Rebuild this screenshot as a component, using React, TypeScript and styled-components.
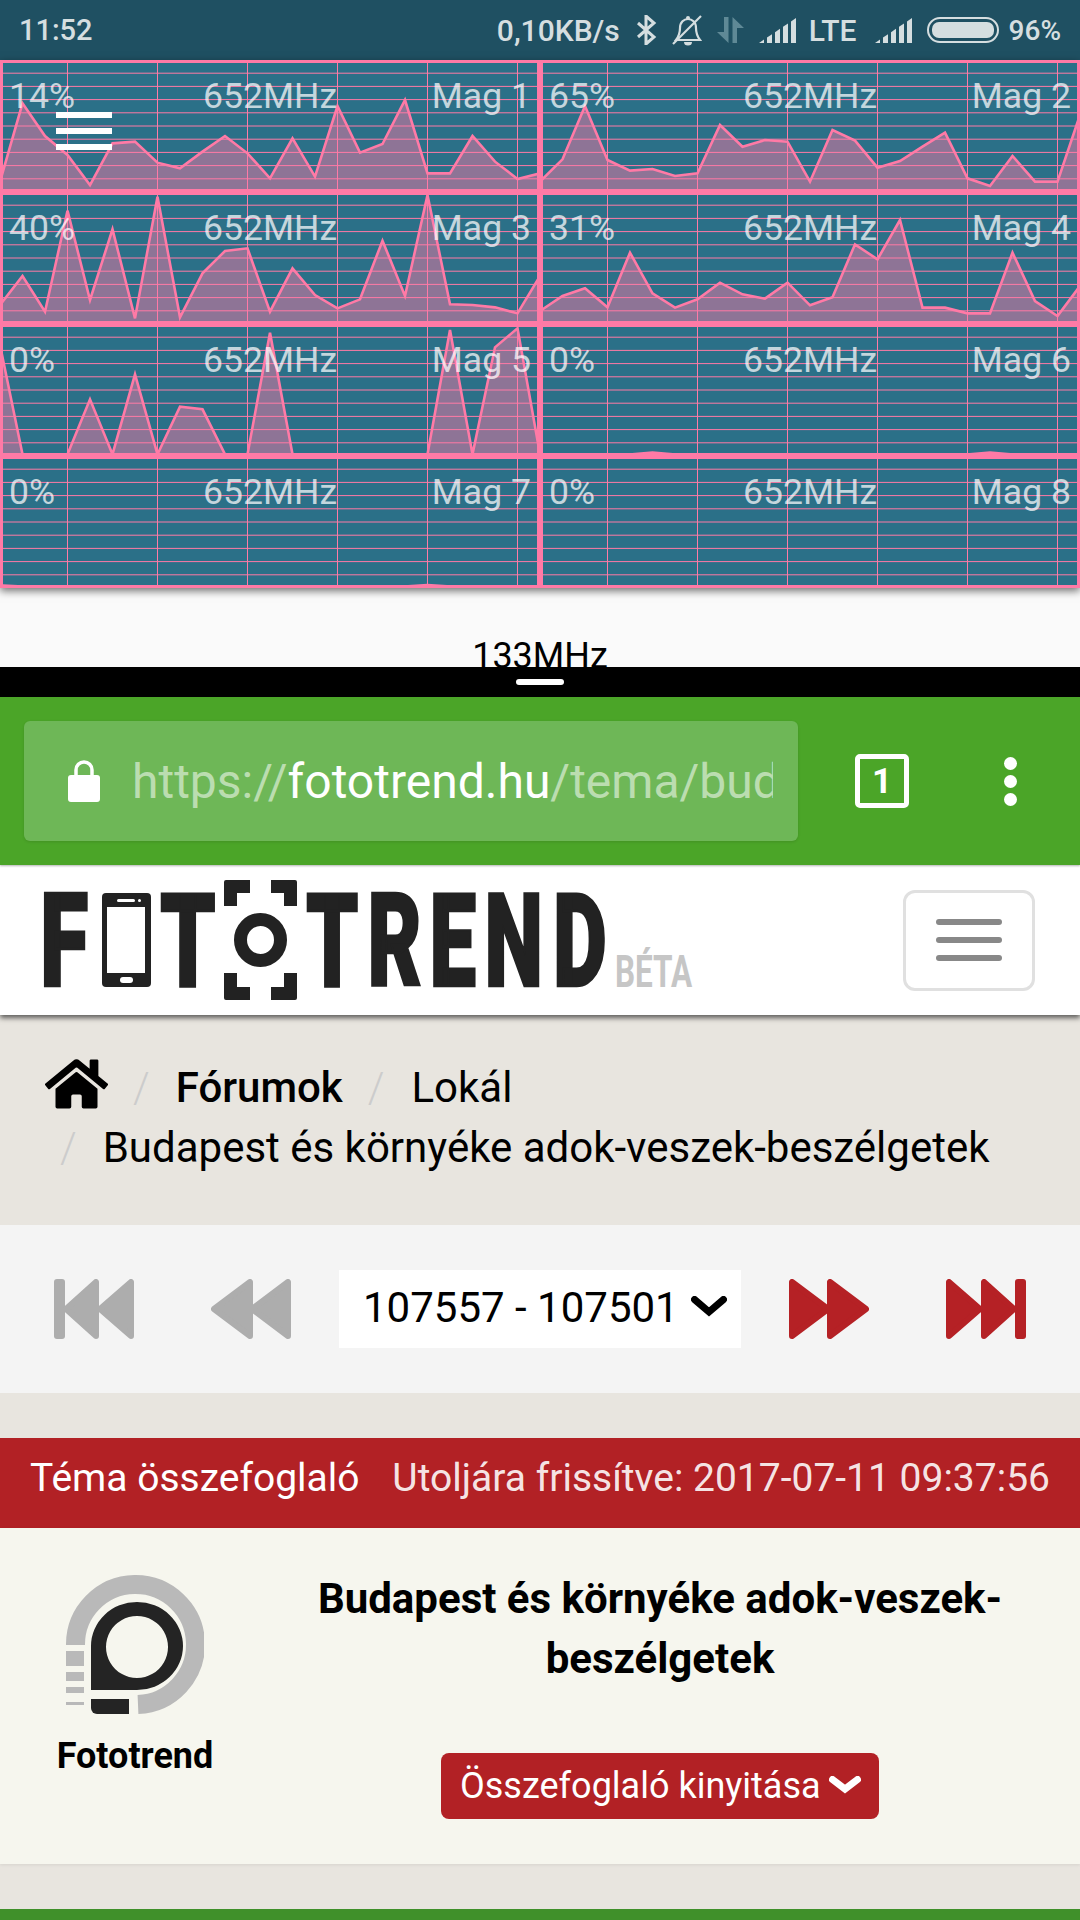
import React from "react";
import styled, { createGlobalStyle } from "styled-components";
import { FaHome } from "react-icons/fa";

const Global = createGlobalStyle`
  html, body { margin: 0; padding: 0; background: #e8e5df; }
  body { font-family: Roboto, "Liberation Sans", sans-serif; width: 1080px; height: 1920px; overflow: hidden; }
  * { box-sizing: border-box; }
`;

const Page = styled.div`
  width: 1080px;
  height: 1920px;
  display: flex;
  flex-direction: column;
  overflow: hidden;
`;

/* Status bar */
const StatusBar = styled.div`
  height: 60px;
  background: #1f5062;
  display: flex;
  align-items: center;
  padding: 0 19px;
  color: #d5dee0;
  font-size: 29px;
  font-weight: 500;
  flex: none;
`;
const Clock = styled.span`
  margin-right: auto;
`;
const StatusText = styled.span<{ $ml?: number; $size?: number }>`
  margin-left: ${(p) => p.$ml ?? 0}px;
  font-size: ${(p) => p.$size ?? 30}px;
`;
const StatusIcon = styled.svg<{ $ml: number }>`
  margin-left: ${(p) => p.$ml}px;
  flex: none;
  display: block;
`;

const Signal = ({ ml }: { ml: number }) => {
  const W = 37;
  const H = 25;
  const bars = [0, 8, 16, 24, 32];
  return (
    <StatusIcon $ml={ml} width={W} height={H} viewBox={`0 0 ${W} ${H}`}>
      {bars.map((x) => {
        const x1 = x + 5;
        const y0 = H * (1 - x / W);
        const y1 = H * (1 - x1 / W);
        return <polygon key={x} points={`${x},${y0} ${x1},${y1} ${x1},${H} ${x},${H}`} fill="#d5dee0" />;
      })}
    </StatusIcon>
  );
};

/* CPU graph grid */
const ChartGrid = styled.div`
  height: 528px;
  flex: none;
  display: grid;
  grid-template-columns: 540px 540px;
  grid-template-rows: repeat(4, 132px);
  position: relative;
  z-index: 2;
  box-shadow: 0 3px 8px rgba(0, 0, 0, 0.55);
`;
const ChartCell = styled.div`
  position: relative;
  background: #2b7088;
  border: 3px solid #ff7aa6;
  overflow: hidden;
`;
const ChartSvg = styled.svg`
  position: absolute;
  left: -3px;
  top: -3px;
  width: 540px;
  height: 132px;
`;
const LabelRow = styled.div`
  position: absolute;
  left: 0;
  right: 0;
  top: 13px;
  padding: 0 6px 0 6px;
  display: grid;
  grid-template-columns: 1fr auto 1fr;
  font-size: 35.6px;
  line-height: 40px;
  color: rgba(255, 255, 255, 0.72);
`;
const LabelEnd = styled.span`
  text-align: right;
`;
const MenuOverlay = styled.div`
  position: absolute;
  left: 56px;
  top: 52px;
  width: 56px;
  display: flex;
  flex-direction: column;
  gap: 10px;
`;
const MenuBar = styled.span`
  height: 6px;
  background: #fff;
`;

/* below graph */
const ClockBand = styled.div`
  height: 79px;
  flex: none;
  background: #fafafa;
  overflow: hidden;
  text-align: center;
  padding-top: 48px;
  font-size: 36px;
  line-height: 40px;
  color: #000;
`;
const Divider = styled.div`
  height: 30px;
  flex: none;
  background: #000;
  display: flex;
  align-items: center;
  justify-content: center;
`;
const Handle = styled.span`
  width: 48px;
  height: 6px;
  border-radius: 3px;
  background: #fff;
`;

/* browser bar */
const BrowserBar = styled.div`
  height: 168px;
  flex: none;
  background: #4ba528;
  display: flex;
  align-items: center;
  padding-left: 24px;
  box-shadow: 0 1px 2px rgba(0, 0, 0, 0.3);
  position: relative;
  z-index: 1;
`;
const UrlBox = styled.div`
  width: 774px;
  height: 120px;
  flex: none;
  background: #6eb757;
  border-radius: 6px;
  display: flex;
  align-items: center;
  padding-left: 44px;
  box-shadow: 0 1px 3px rgba(0, 0, 0, 0.12);
`;
const UrlText = styled.div`
  margin-left: 32px;
  width: 641px;
  overflow: hidden;
  white-space: nowrap;
  font-size: 48px;
  color: rgba(255, 255, 255, 0.55);
`;
const UrlHost = styled.span`
  color: #fff;
`;
const TabCount = styled.div`
  margin-left: 57px;
  width: 54px;
  height: 54px;
  flex: none;
  border: 5px solid #fff;
  border-radius: 5px;
  color: #fff;
  font-size: 35px;
  font-weight: 700;
  display: flex;
  align-items: center;
  justify-content: center;
`;
const Kebab = styled.div`
  margin-left: 95px;
  display: flex;
  flex-direction: column;
  gap: 5px;
`;
const KebabDot = styled.span`
  width: 13px;
  height: 13px;
  border-radius: 50%;
  background: #fff;
`;

/* site header */
const SiteHeader = styled.header`
  height: 150px;
  flex: none;
  background: #fff;
  display: flex;
  align-items: center;
  padding: 0 45px 0 40px;
  justify-content: space-between;
  position: relative;
  box-shadow: 0 3px 5px rgba(0, 0, 0, 0.6);
`;
const LogoSvg = styled.svg`
  width: 660px;
  height: 130px;
  display: block;
`;
const LogoLetter = styled.text`
  font-family: Roboto, sans-serif;
  font-weight: 900;
  font-size: 130px;
  fill: #222;
  stroke: #222;
  stroke-width: 2.5;
`;
const LogoBeta = styled.text`
  font-family: Roboto, sans-serif;
  font-weight: 700;
  font-size: 45px;
  fill: #c6c6c6;
`;
const Burger = styled.div`
  width: 132px;
  height: 101px;
  border: 3px solid #e0e0e0;
  border-radius: 12px;
  display: flex;
  flex-direction: column;
  align-items: center;
  justify-content: center;
  gap: 12px;
`;
const BurgerBar = styled.span`
  width: 66px;
  height: 6px;
  border-radius: 3px;
  background: #888;
`;

/* breadcrumb */
const Crumbs = styled.nav`
  height: 210px;
  flex: none;
  padding: 43px 45px 0;
  display: flex;
  flex-wrap: wrap;
  align-content: flex-start;
  font-size: 42px;
  line-height: 60px;
  color: #000;
`;
const CrumbLine = styled.div<{ $indent?: number }>`
  width: 100%;
  display: flex;
  align-items: center;
  padding-left: ${(p) => p.$indent ?? 0}px;
`;
const HomeIcon = styled(FaHome)`
  width: 63px;
  height: 56px;
  margin-top: -9px;
  color: #000;
  display: block;
  flex: none;
`;
const Slash = styled.span<{ $ml: number; $mr: number }>`
  color: #ccc;
  margin-left: ${(p) => p.$ml}px;
  margin-right: ${(p) => p.$mr}px;
  font-weight: 300;
`;
const CrumbStrong = styled.span`
  font-weight: 500;
`;

/* pager */
const Pager = styled.div`
  height: 168px;
  flex: none;
  background: #f4f4f4;
  display: flex;
  align-items: center;
  padding-left: 54px;
`;
const PagerIcon = styled.svg<{ $ml: number; $on?: boolean }>`
  width: 80px;
  height: 60px;
  margin-left: ${(p) => p.$ml}px;
  fill: ${(p) => (p.$on ? "#b52125" : "#adadad")};
  stroke: ${(p) => (p.$on ? "#b52125" : "#adadad")};
  stroke-width: 6;
  stroke-linejoin: round;
  display: block;
  flex: none;
`;
const PageSelect = styled.div`
  margin-left: 48px;
  width: 402px;
  height: 78px;
  background: #fff;
  display: flex;
  align-items: center;
  padding: 0 0 4px 24px;
  font-size: 42px;
  color: #000;
`;
const Chevron = styled.svg<{ $ml: number }>`
  margin-left: ${(p) => p.$ml}px;
  flex: none;
  display: block;
`;

const Gap = styled.div`
  height: 45px;
  flex: none;
`;

/* summary */
const SummaryBar = styled.div`
  height: 90px;
  flex: none;
  background: #b22125;
  display: flex;
  align-items: center;
  padding: 0 30px 10px 30px;
  font-size: 39px;
  color: #fff;
  justify-content: space-between;
`;
const SummaryDate = styled.span`
  color: rgba(255, 255, 255, 0.9);
`;
const SummaryPanel = styled.section`
  height: 336px;
  flex: none;
  background: #f6f6ee;
  display: flex;
  box-shadow: 0 1px 3px rgba(0, 0, 0, 0.08);
  position: relative;
`;
const Author = styled.div`
  width: 270px;
  flex: none;
  padding-top: 47px;
  display: flex;
  flex-direction: column;
  align-items: center;
`;
const AuthorName = styled.div`
  margin-top: 22px;
  font-size: 36px;
  font-weight: 700;
  line-height: 40px;
  color: #000;
`;
const TopicCol = styled.div`
  margin-left: 10px;
  width: 760px;
  padding-top: 41px;
  display: flex;
  flex-direction: column;
  align-items: center;
`;
const TopicTitle = styled.h1`
  margin: 0;
  font-size: 42px;
  font-weight: 700;
  line-height: 60px;
  text-align: center;
  color: #000;
  padding: 0 30px;
`;
const OpenButton = styled.div`
  margin-top: 64px;
  width: 438px;
  height: 66px;
  border-radius: 8px;
  background: #b22125;
  color: #fff;
  font-size: 36px;
  display: flex;
  align-items: center;
  padding-left: 19px;
  white-space: nowrap;
`;
const BottomBar = styled.div`
  flex: 1;
  background: #40902a;
`;

/* data */
const conv = (zs: number[], off: number) => zs.map((z) => z / 3 + off);
const B = 130.5;
const flat = (over: Record<number, number> = {}) => Array.from({ length: 25 }, (_, i) => over[i] ?? B);

const cells = [
  { p: "14%", m: "Mag 1", d: conv([545, 310, 408, 465, 555, 430, 425, 488, 505, 455, 408, 460, 535, 415, 530, 318, 458, 432, 300, 520, 520, 408, 485, 537, 520], -60) },
  { p: "65%", m: "Mag 2", d: conv([395, 328, 168, 330, 362, 357, 378, 370, 225, 290, 270, 275, 395, 240, 272, 353, 333, 290, 248, 385, 408, 318, 395, 395, 195], -10) },
  { p: "40%", m: "Mag 3", d: conv([345, 258, 365, 62, 330, 118, 385, 20, 382, 250, 183, 175, 365, 235, 315, 355, 328, 152, 318, 15, 343, 345, 352, 370, 258], -2) },
  { p: "31%", m: "Mag 4", d: conv([783, 738, 715, 772, 608, 730, 773, 748, 698, 733, 746, 698, 766, 742, 583, 628, 510, 773, 773, 790, 790, 608, 753, 798, 708], -142) },
  { p: "0%", m: "Mag 5", d: conv([465, 793, 793, 793, 628, 793, 553, 793, 650, 658, 793, 793, 428, 793, 793, 793, 793, 793, 793, 793, 420, 793, 472, 415, 793], -134) },
  { p: "0%", m: "Mag 6", d: flat({ 5: 128.5, 20: 128.5 }) },
  { p: "0%", m: "Mag 7", d: flat({ 0: 129.5, 19: 129 }) },
  { p: "0%", m: "Mag 8", d: flat() },
];

const hLines = Array.from({ length: 9 }, (_, i) => (i + 1) * 13.2);
const vLines = [67.5, 157.5, 247.5, 337.5, 427.5, 517.5];

const Chart = ({ data }: { data: number[] }) => {
  const pts = data.map((y, i) => `${i * 22.5},${y}`).join(" ");
  return (
    <ChartSvg viewBox="0 0 540 132">
      {hLines.map((y) => (
        <line key={y} x1="0" x2="540" y1={y} y2={y} stroke="#ff7aa6" strokeWidth="1" />
      ))}
      {vLines.map((x) => (
        <line key={x} x1={x} x2={x} y1="0" y2="132" stroke="#ff7aa6" strokeWidth="1" />
      ))}
      <polygon points={`0,130 ${pts} 540,130`} fill="#ff7aa6" fillOpacity="0.47" />
      <polyline points={pts} fill="none" stroke="#ff7aa6" strokeWidth="2.6" />
    </ChartSvg>
  );
};

const Logo = () => (
  <LogoSvg viewBox="40 875 660 130">
    <LogoLetter transform="translate(40 986) scale(.68 1)">F</LogoLetter>
    <rect x="102" y="893" width="49" height="94" rx="4" fill="#222" />
    <rect x="107" y="907" width="38" height="66" fill="#fff" />
    <rect x="117" y="899" width="18" height="3" rx="1.5" fill="#fff" />
    <circle cx="139.5" cy="900.5" r="1.5" fill="#fff" />
    <rect x="120" y="977" width="13" height="6" rx="3" fill="#fff" />
    <LogoLetter transform="translate(160 986) scale(.68 1)">T</LogoLetter>
    <g fill="#222">
      <path d="M226 880h24v13h-13v13h-13v-24a2 2 0 0 1 2-2z" />
      <path d="M271 880h24a2 2 0 0 1 2 2v24h-13v-13h-13z" />
      <path d="M224 973h13v14h13v13h-24a2 2 0 0 1-2-2z" />
      <path d="M284 973h13v25a2 2 0 0 1-2 2h-24v-13h13z" />
    </g>
    <ellipse cx="260.5" cy="940" rx="20" ry="20.5" fill="none" stroke="#222" strokeWidth="13" />
    <LogoLetter transform="translate(306 986) scale(.64 1)" x="0 96 193 279 386">TREND</LogoLetter>
    <LogoBeta transform="translate(615 987) scale(.7 1)">BÉTA</LogoBeta>
  </LogoSvg>
);

const Down = ({ ml, w, h, sw, color }: { ml: number; w: number; h: number; sw: number; color: string }) => (
  <Chevron $ml={ml} width={w} height={h} viewBox={`0 0 ${w} ${h}`}>
    <polyline points={`${sw / 2},${sw / 2} ${w / 2},${h - sw} ${w - sw / 2},${sw / 2}`} fill="none" stroke={color} strokeWidth={sw} strokeLinecap="round" />
  </Chevron>
);

export default function App() {
  return (
    <Page>
      <Global />
      <StatusBar>
        <Clock>11:52</Clock>
        <StatusText>0,10KB/s</StatusText>
        <StatusIcon $ml={16} width="21" height="30" viewBox="0 0 21 30">
          <polyline points="2,8 18,22 10,29 10,1 18,8 2,22" fill="none" stroke="#d5dee0" strokeWidth="3" />
        </StatusIcon>
        <StatusIcon $ml={15} width="30" height="31" viewBox="0 0 30 31">
          <g fill="none" stroke="#d5dee0" strokeWidth="2.2">
            <path d="M4 25C7 21 8 17 8 13C8 7 12 4 16 4C20 4 24 7 24 13C24 17 25 21 28 25Z" />
            <path d="M1 29L29 1" />
          </g>
          <path d="M12 27h8a4 3.5 0 0 1-8 0z" fill="#d5dee0" />
          <circle cx="16" cy="3" r="2" fill="#d5dee0" />
        </StatusIcon>
        <StatusIcon $ml={15} width="27" height="26" viewBox="0 0 27 26">
          <path d="M7 0h4.5v26L0 15h7zM15.5 0L27 11h-7v15h-4.5z" fill="#5f8996" />
        </StatusIcon>
        <Signal ml={15} />
        <StatusText $ml={13}>LTE</StatusText>
        <Signal ml={18} />
        <StatusIcon $ml={15} width="72" height="26" viewBox="0 0 72 26">
          <rect x="1" y="1" width="70" height="24" rx="12" fill="none" stroke="#d5dee0" strokeWidth="2" />
          <rect x="5" y="5" width="62" height="16" rx="7" fill="#d5dee0" />
        </StatusIcon>
        <StatusText $ml={10} $size={28}>96%</StatusText>
      </StatusBar>

      <ChartGrid>
        {cells.map((c) => (
          <ChartCell key={c.m}>
            <Chart data={c.d} />
            <LabelRow>
              <span>{c.p}</span>
              <span>652MHz</span>
              <LabelEnd>{c.m}</LabelEnd>
            </LabelRow>
          </ChartCell>
        ))}
        <MenuOverlay>
          <MenuBar />
          <MenuBar />
          <MenuBar />
        </MenuOverlay>
      </ChartGrid>

      <ClockBand>133MHz</ClockBand>
      <Divider>
        <Handle />
      </Divider>

      <BrowserBar>
        <UrlBox>
          <svg width="32" height="42" viewBox="0 0 32 42" style={{ flex: "none" }}>
            <path d="M8 16V10a8 8 0 0 1 16 0v6" fill="none" stroke="#fff" strokeWidth="3.5" />
            <rect x="0" y="15" width="32" height="27" rx="3" fill="#fff" />
          </svg>
          <UrlText>
            https://<UrlHost>fototrend.hu</UrlHost>/tema/budapest-es-kornyeke
          </UrlText>
        </UrlBox>
        <TabCount>1</TabCount>
        <Kebab>
          <KebabDot />
          <KebabDot />
          <KebabDot />
        </Kebab>
      </BrowserBar>

      <SiteHeader>
        <Logo />
        <Burger>
          <BurgerBar />
          <BurgerBar />
          <BurgerBar />
        </Burger>
      </SiteHeader>

      <Crumbs>
        <CrumbLine>
          <HomeIcon preserveAspectRatio="none" />
          <Slash $ml={25} $mr={26}>/</Slash>
          <CrumbStrong>Fórumok</CrumbStrong>
          <Slash $ml={25} $mr={27}>/</Slash>
          <span>Lokál</span>
        </CrumbLine>
        <CrumbLine $indent={15}>
          <Slash $ml={0} $mr={26}>/</Slash>
          <span>Budapest és környéke adok-veszek-beszélgetek</span>
        </CrumbLine>
      </Crumbs>

      <Pager>
        <PagerIcon $ml={0} viewBox="0 0 80 60">
          <rect x="3" y="3" width="5" height="54" />
          <path d="M42 3V57L12 30zM77 3V57L46 30z" />
        </PagerIcon>
        <PagerIcon $ml={77} viewBox="0 0 80 60">
          <path d="M39 3V57L3 30zM77 3V57L41 30z" />
        </PagerIcon>
        <PageSelect>
          107557 - 107501
          <Down ml={12} w={36} h={23} sw={7} color="#000" />
        </PageSelect>
        <PagerIcon $ml={48} $on viewBox="0 0 80 60">
          <path d="M3 3V57L39 30zM41 3V57L77 30z" />
        </PagerIcon>
        <PagerIcon $ml={77} $on viewBox="0 0 80 60">
          <rect x="72" y="3" width="5" height="54" />
          <path d="M3 3V57L34 30zM38 3V57L68 30z" />
        </PagerIcon>
      </Pager>

      <Gap />

      <SummaryBar>
        <span>Téma összefoglaló</span>
        <SummaryDate>Utoljára frissítve: 2017-07-11 09:37:56</SummaryDate>
      </SummaryBar>
      <SummaryPanel>
        <Author>
          <svg width="138" height="139" viewBox="66 1575 138 139">
            <path d="M75.5 1645A60 60 0 1 1 138 1704.5" fill="none" stroke="#b9b9b9" strokeWidth="19" />
            <g fill="#b9b9b9">
              <rect x="66" y="1651" width="18" height="15" />
              <rect x="66" y="1672" width="18" height="9" />
              <rect x="66" y="1687" width="18" height="6" />
              <rect x="66" y="1702" width="18" height="3" />
            </g>
            <path
              d="M91 1690V1646A46 44 0 1 1 137 1690ZM137 1616A31 31 0 1 0 137.01 1616Z"
              fill="#242424"
              fillRule="evenodd"
            />
            <path d="M91 1699H129V1714H97a6 6 0 0 1-6-6Z" fill="#242424" />
          </svg>
          <AuthorName>Fototrend</AuthorName>
        </Author>
        <TopicCol>
          <TopicTitle>Budapest és környéke adok-veszek-beszélgetek</TopicTitle>
          <OpenButton>
            Összefoglaló kinyitása
            <Down ml={8} w={32} h={20} sw={7} color="#fff" />
          </OpenButton>
        </TopicCol>
      </SummaryPanel>
      <Gap />
      <BottomBar />
    </Page>
  );
}
